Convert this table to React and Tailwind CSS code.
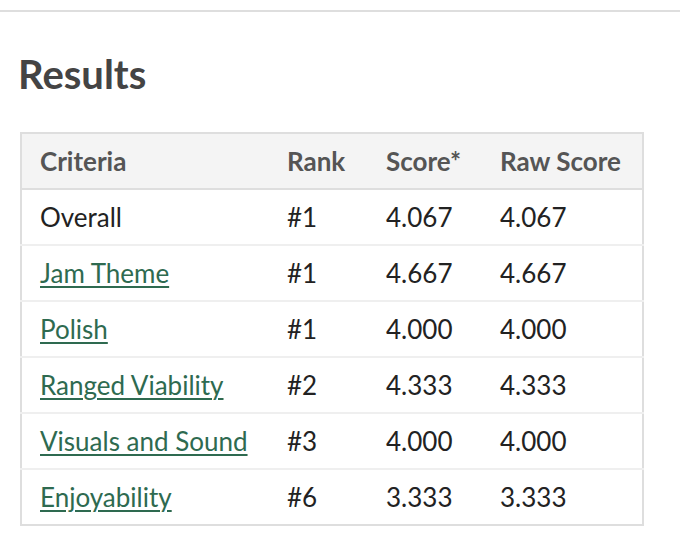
const rows = [
  { name: 'Overall', rank: '#1', score: '4.067', raw: '4.067', link: false },
  { name: 'Jam Theme', rank: '#1', score: '4.667', raw: '4.667', link: true },
  { name: 'Polish', rank: '#1', score: '4.000', raw: '4.000', link: true },
  { name: 'Ranged Viability', rank: '#2', score: '4.333', raw: '4.333', link: true },
  { name: 'Visuals and Sound', rank: '#3', score: '4.000', raw: '4.000', link: true },
  { name: 'Enjoyability', rank: '#6', score: '3.333', raw: '3.333', link: true },
];

export default function App() {
  return (
    <div className="min-h-[552px] w-[680px] bg-white font-['Lato',sans-serif] text-[#222]">
      <div className="pt-[10px]">
        <div className="h-[2px] bg-[#dedede]" />
      </div>
      <div className="px-5">
        <h2 className="-ml-[2px] mt-[38px] text-[40px] font-bold leading-[48px] text-[#444]">Results</h2>
        <table className="mt-[34px] w-[624px] table-fixed border-collapse border-2 border-[#dedede] text-[26px]">
          <colgroup>
            <col className="w-[266px]" />
            <col className="w-[99px]" />
            <col className="w-[114px]" />
            <col />
          </colgroup>
          <thead>
            <tr className="h-[56px] border-b-2 border-[#dedede] bg-[#f4f4f4] text-left text-[#555]">
              <th className="pl-[18px] font-bold">Criteria</th>
              <th className="font-bold">Rank</th>
              <th className="font-bold">Score*</th>
              <th className="font-bold">Raw Score</th>
            </tr>
          </thead>
          <tbody>
            {rows.map((r) => (
              <tr key={r.name} className="h-[56px] border-b-2 border-[#efefef] last:border-b-0">
                <td className="pl-[18px]">
                  {r.link ? (
                    <a href="#" className="text-[#2e6a50] underline decoration-2 underline-offset-[3px]">
                      {r.name}
                    </a>
                  ) : (
                    r.name
                  )}
                </td>
                <td>{r.rank}</td>
                <td>{r.score}</td>
                <td>{r.raw}</td>
              </tr>
            ))}
          </tbody>
        </table>
      </div>
    </div>
  );
}
